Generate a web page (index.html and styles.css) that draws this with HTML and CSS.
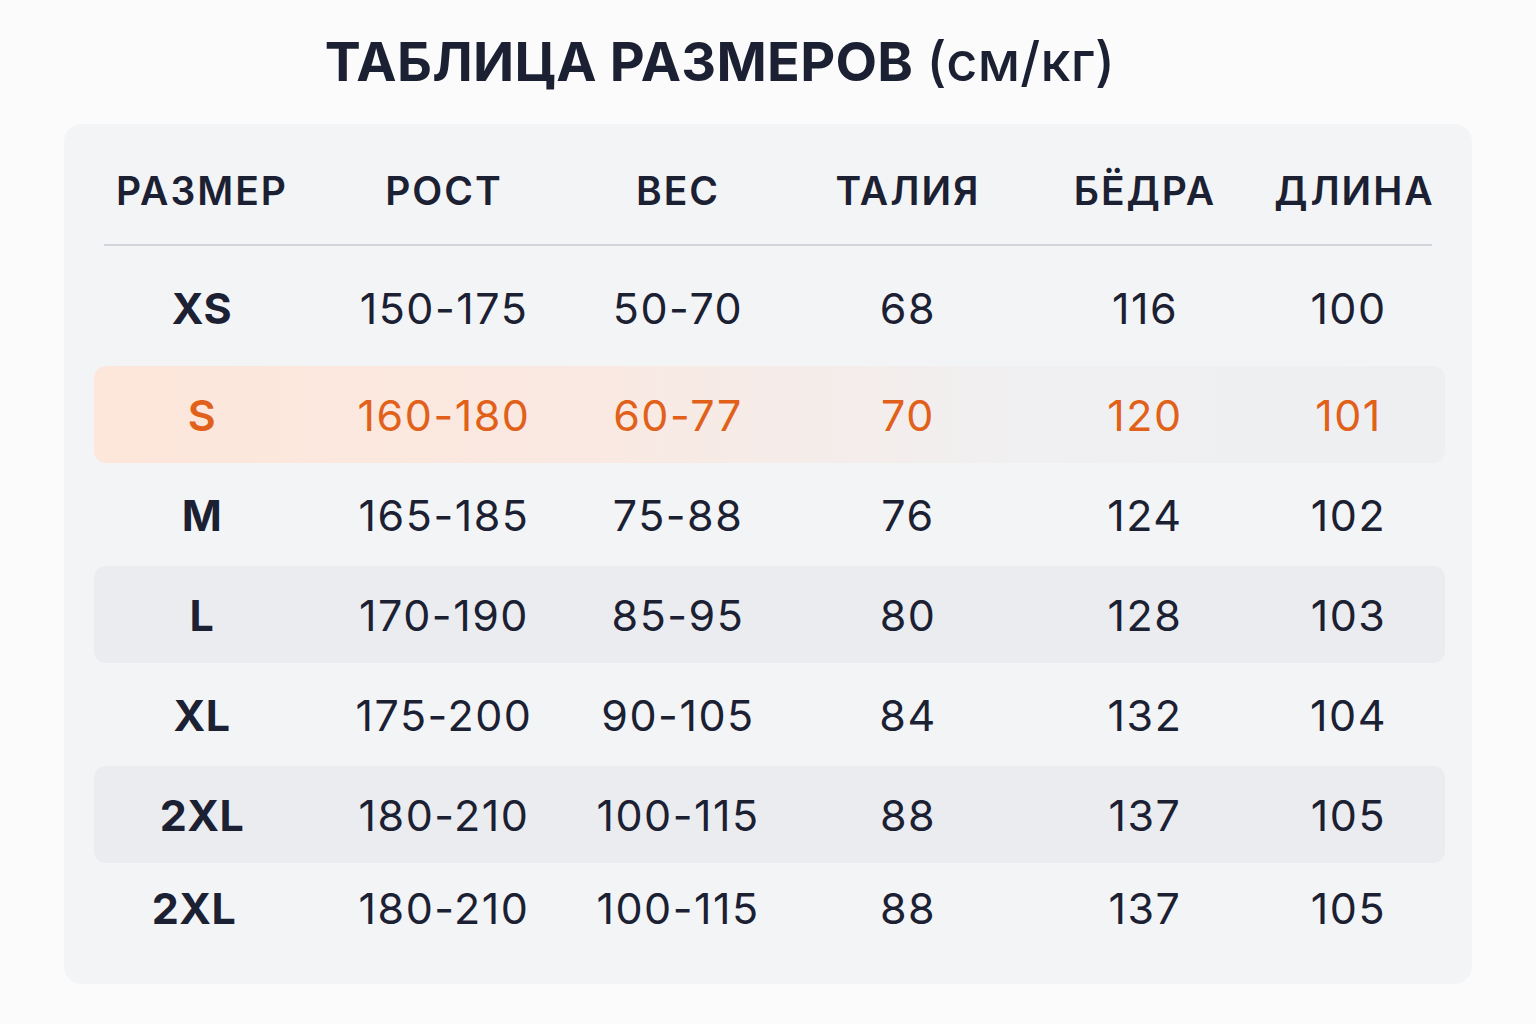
FILE: index.html
```html
<!DOCTYPE html>
<html lang="ru">
<head>
<meta charset="utf-8">
<title>Таблица размеров</title>
<link rel="stylesheet" href="styles.css">
</head>
<body>
<main class="page">
  <h1 class="title">ТАБЛИЦА РАЗМЕРОВ <span class="title-unit">(см/кг)</span></h1>
  <section class="card">
    <div class="row head">
      <div class="cell">РАЗМЕР</div>
      <div class="cell">РОСТ</div>
      <div class="cell">ВЕС</div>
      <div class="cell">ТАЛИЯ</div>
      <div class="cell">БЁДРА</div>
      <div class="cell">ДЛИНА</div>
    </div>
    <div class="divider"></div>
    <div class="body">
      <div class="row first">
        <div class="cell size">XS</div><div class="cell">150-175</div><div class="cell">50-70</div><div class="cell">68</div><div class="cell">116</div><div class="cell">100</div>
      </div>
      <div class="row active">
        <div class="cell size">S</div><div class="cell">160-180</div><div class="cell">60-77</div><div class="cell">70</div><div class="cell">120</div><div class="cell">101</div>
      </div>
      <div class="row">
        <div class="cell size">M</div><div class="cell">165-185</div><div class="cell">75-88</div><div class="cell">76</div><div class="cell">124</div><div class="cell">102</div>
      </div>
      <div class="row stripe">
        <div class="cell size">L</div><div class="cell">170-190</div><div class="cell">85-95</div><div class="cell">80</div><div class="cell">128</div><div class="cell">103</div>
      </div>
      <div class="row">
        <div class="cell size">XL</div><div class="cell">175-200</div><div class="cell">90-105</div><div class="cell">84</div><div class="cell">132</div><div class="cell">104</div>
      </div>
      <div class="row stripe">
        <div class="cell size">2XL</div><div class="cell">180-210</div><div class="cell">100-115</div><div class="cell">88</div><div class="cell">137</div><div class="cell">105</div>
      </div>
      <div class="row last">
        <div class="cell size">2XL</div><div class="cell">180-210</div><div class="cell">100-115</div><div class="cell">88</div><div class="cell">137</div><div class="cell">105</div>
      </div>
    </div>
  </section>
</main>
</body>
</html>
```
FILE: styles.css
```css
* { box-sizing: border-box; }
html, body {
  margin: 0;
  padding: 0;
  background: #fbfbfc;
}
body {
  font-family: Inter, "Noto Sans", "DejaVu Sans", sans-serif;
  color: #1b2133;
  width: 1536px;
  height: 1024px;
  overflow: hidden;
}
.page {
  padding: 27px 64px 0 64px;
}
.title {
  margin: 0 0 27px 0;
  padding-right: 96px;
  text-align: center;
  font-size: 54px;
  line-height: 70px;
  font-weight: 700;
  letter-spacing: 0.3px;
  color: #1b2133;
}
.title-unit {
  font-weight: 500;
}
.card {
  width: 1408px;
  height: 860px;
  background: #f3f4f6;
  border-radius: 18px;
  padding: 0 27px 0 30px;
}
.row {
  display: grid;
  grid-template-columns: 216px 268px 200px 260px 214px 193px;
  align-items: center;
  height: 97px;
  border-radius: 12px;
  font-size: 43px;
  font-weight: 400;
  letter-spacing: 1.5px;
}
.cell {
  text-align: center;
}
.head {
  height: 120px;
  padding-top: 12px;
  font-size: 39px;
  font-weight: 600;
  letter-spacing: 2px;
}
.head .cell:last-child {
  padding-left: 12px;
}
.divider {
  height: 2px;
  background: #d2d5db;
  margin: 0 13px 0 10px;
}
.body {
  display: flex;
  flex-direction: column;
  gap: 3px;
  padding-top: 13px;
}
.first {
  margin-bottom: 7px;
}
.stripe + .row.last {
  height: 84px;
}
.size {
  font-weight: 700;
  letter-spacing: 0.5px;
}
.last .size {
  padding-right: 16px;
}
.stripe {
  background: #ebecef;
}
.active {
  background: linear-gradient(90deg, #fde6da 0%, #f9e9e2 38%, #f0f0f2 70%, #eeeff1 100%);
  color: #e1611a;
}
.active .size {
  font-weight: 600;
}
```
